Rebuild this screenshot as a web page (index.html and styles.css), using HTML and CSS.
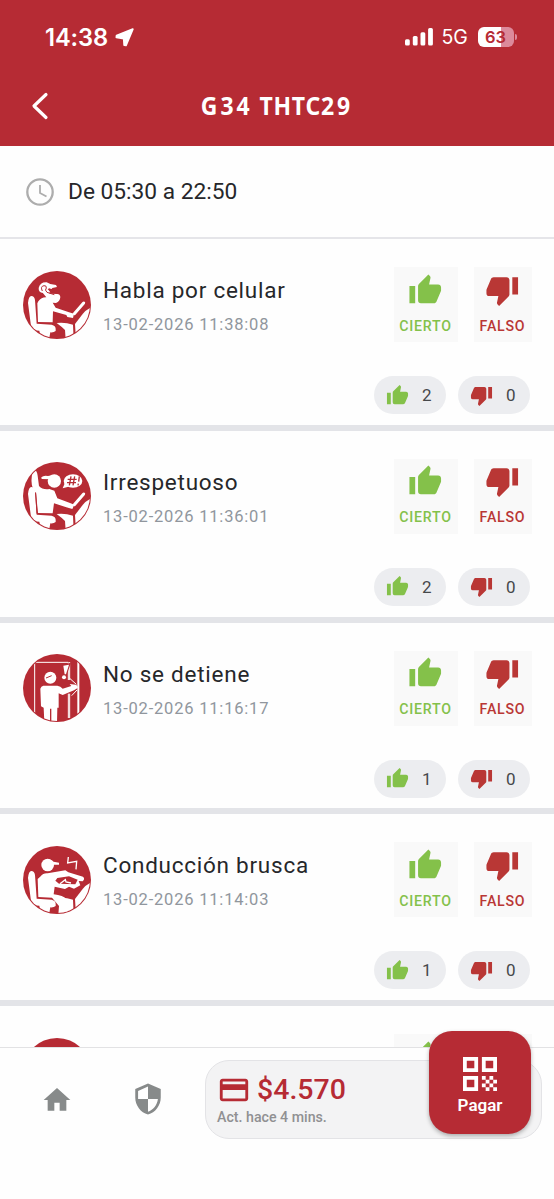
FILE: index.html
```html
<!DOCTYPE html>
<html lang="es">
<head>
<meta charset="utf-8">
<title>G34 THTC29</title>
<link rel="stylesheet" href="styles.css">
</head>
<body>
<svg class="defs" width="0" height="0">
  <symbol id="up" viewBox="0 0 24 24"><path d="M23,10C23,8.89 22.1,8 21,8H14.68L15.64,3.43C15.66,3.33 15.67,3.22 15.67,3.11C15.67,2.7 15.5,2.32 15.23,2.05L14.17,1L7.59,7.58C7.22,7.95 7,8.45 7,9V19A2,2 0 0,0 9,21H18C18.83,21 19.54,20.5 19.84,19.78L22.86,12.73C22.95,12.5 23,12.26 23,12V10M1,21H5V9H1V21Z"/></symbol>
  <symbol id="down" viewBox="0 0 24 24"><path d="M19,15H23V3H19M15,3H6C5.17,3 4.46,3.5 4.16,4.22L1.14,11.27C1.05,11.5 1,11.74 1,12V14A2,2 0 0,0 3,16H9.31L8.36,20.57C8.34,20.67 8.33,20.77 8.33,20.88C8.33,21.3 8.5,21.67 8.77,21.94L9.83,23L16.41,16.41C16.78,16.05 17,15.55 17,15V5C17,3.89 16.1,3 15,3Z"/></symbol>
  <clipPath id="disc"><circle cx="126" cy="128" r="99"/></clipPath>
  <g id="seat">
    <path d="M39 122Q41 101 49 101Q58 101 60 113L65 184L110 187Q122 190 122 199V206Q116 211 106 210L102 232L76 222L73 205Q53 204 49 199Z" fill="#fff"/>
    <path d="M125 182Q150 179 174 187L176 232H152L150 203Q140 193 125 182Z" fill="#fff"/>
  </g>
  <path id="dash" d="M232 134Q214 141 203 155L180 185L182 217L232 200Z" fill="#fff"/>
  <path id="wheel" d="M178 154L206 122" stroke="#fff" stroke-width="9" stroke-linecap="round"/>
</svg>
<div class="screen">
  <header class="header">
    <div class="status">
      <span class="time">14:38</span>
      <svg class="loc" viewBox="0 0 19 19"><path d="M17.8 1.2L11 17.4L9.2 17.2L8.8 10.6L1.4 9.4L1.6 7.6Z"/></svg>
      <svg class="signal" viewBox="0 0 28 18"><rect y="11.3" width="4.8" height="6.3" rx="1.5"/><rect x="7.8" y="8" width="4.8" height="9.6" rx="1.5"/><rect x="15.5" y="4.2" width="4.8" height="13.4" rx="1.5"/><rect x="23.1" y="0" width="4.8" height="17.6" rx="1.5"/></svg>
      <span class="net">5G</span>
      <span class="battery">63</span><span class="tip"></span>
    </div>
    <div class="titlebar">
      <svg class="back" viewBox="0 0 18 28"><path d="M15 2.5L3 14L15 25.5"/></svg>
      <h1 class="title"><span class="wide">G34</span> THTC<span class="wide">29</span></h1>
    </div>
  </header>
  <section class="schedule">
    <svg class="clock" viewBox="0 0 28 28"><circle cx="14" cy="14" r="12.7"/><path d="M14 7V15L20.5 18.5"/></svg>
    <span>De 05:30 a 22:50</span>
  </section>
  <main class="list">
    <article class="item">
      <div class="top">
        <svg class="avatar" viewBox="24 26 204 204">
          <circle cx="126" cy="128" r="102" fill="#b62b34"/>
          <g clip-path="url(#disc)">
            <use href="#seat"/>
            <use href="#dash"/>
            <use href="#wheel"/>
            <path d="M70 117Q80 104 94 105L83 91L93 88L106 94L125 95Q135 94 136 104Q135 118 123 122L113 121L122 136L162 150L177 154L174 167L157 164L154 158L114 147L113 180L69 179L67 123Z" fill="#fff"/>
            <path d="M84 92Q70 91 71 77Q75 59 95 60L106 65L123 68L126 74L112 77Q110 82 104 78L98 80L106 90L95 94" fill="#fff"/>
            <path d="M82 86Q75 72 87 70Q95 69 94 77Q88 83 96 90L118 97" fill="none" stroke="#b62b34" stroke-width="3"/>
          </g>
        </svg>
        <div class="text"><h2>Habla por celular</h2><time>13-02-2026 11:38:08</time></div>
        <button class="vote yes"><svg><use href="#up"/></svg>CIERTO</button>
        <button class="vote no"><svg><use href="#down"/></svg>FALSO</button>
      </div>
      <div class="counts"><span class="pill yes"><svg><use href="#up"/></svg><b>2</b></span><span class="pill no"><svg><use href="#down"/></svg><b>0</b></span></div>
    </article>
    <article class="item">
      <div class="top">
        <svg class="avatar" viewBox="24 26 204 204">
          <circle cx="126" cy="128" r="102" fill="#b62b34"/>
          <g clip-path="url(#disc)">
            <use href="#seat"/>
            <use href="#dash"/>
            <use href="#wheel"/>
            <path d="M59 50Q66 52 68 67L72 98Q83 110 103 107L118 112L127 135L165 149L178 154L172 167L154 162L117 150L113 180L69 179L63 120L54 106Q48 92 50 74Q51 52 59 50Z" fill="#fff"/>
            <circle cx="118" cy="83" r="20" fill="#fff"/>
            <path d="M79 72Q86 65 99 68L114 65L108 78L80 77Z" fill="#fff"/>
            <path d="M62 118L66 181" fill="none" stroke="#b62b34" stroke-width="3"/>
            <ellipse cx="174" cy="83" rx="28" ry="20" fill="#fff"/><path d="M150 88L143 105L166 99Z" fill="#fff"/>
            <path d="M168 69L163 96M179 69L174 96M158 78H185M156 88H183M193 69L191 85M190 91L189 96" fill="none" stroke="#b62b34" stroke-width="4"/>
          </g>
        </svg>
        <div class="text"><h2>Irrespetuoso</h2><time>13-02-2026 11:36:01</time></div>
        <button class="vote yes"><svg><use href="#up"/></svg>CIERTO</button>
        <button class="vote no"><svg><use href="#down"/></svg>FALSO</button>
      </div>
      <div class="counts"><span class="pill yes"><svg><use href="#up"/></svg><b>2</b></span><span class="pill no"><svg><use href="#down"/></svg><b>0</b></span></div>
    </article>
    <article class="item">
      <div class="top">
        <svg class="avatar" viewBox="24 26 204 204">
          <circle cx="126" cy="128" r="102" fill="#b62b34"/>
          <g clip-path="url(#disc)">
            <path d="M59 205V51H160V104M160 145V218M164 50V104M164 145V218" fill="none" stroke="#fff" stroke-width="3"/>
            <path d="M190 48V205" stroke="#fff" stroke-width="6"/>
            <circle cx="106" cy="97" r="18" fill="#fff"/>
            <path d="M93 98L110 91" stroke="#b62b34" stroke-width="3"/>
            <path d="M85 121H127Q137 122 143 130L169 122L164 116L182 118Q190 121 188 128L177 135L143 149L131 144V187H127L126 232H109V190H105V232H88L86 187L78 183L76 130Q78 122 85 121Z" fill="#fff"/>
            <path d="M143 61L164 56L153 87H148Z" fill="#b62b34" stroke="#b62b34" stroke-width="5"/>
            <path d="M145 61L162 58L153 87H149Z" fill="#fff"/><circle cx="147" cy="96" r="6" fill="#fff"/>
            <path d="M163 98L184 117M170 151L186 134" stroke="#fff" stroke-width="3"/>
          </g>
        </svg>
        <div class="text"><h2>No se detiene</h2><time>13-02-2026 11:16:17</time></div>
        <button class="vote yes"><svg><use href="#up"/></svg>CIERTO</button>
        <button class="vote no"><svg><use href="#down"/></svg>FALSO</button>
      </div>
      <div class="counts"><span class="pill yes"><svg><use href="#up"/></svg><b>1</b></span><span class="pill no"><svg><use href="#down"/></svg><b>0</b></span></div>
    </article>
    <article class="item">
      <div class="top">
        <svg class="avatar" viewBox="24 26 204 204">
          <circle cx="126" cy="128" r="102" fill="#b62b34"/>
          <g clip-path="url(#disc)">
            <use href="#seat"/>
            <use href="#dash"/>
            <circle cx="98" cy="83" r="19" fill="#fff"/>
            <path d="M100 65L116 73L132 76V82H112Z" fill="#fff"/>
            <path d="M77 117Q84 107 98 108L151 99L160 105L204 118Q211 124 203 132L191 131L196 144L177 154L162 148L150 155L119 148L116 171Q144 174 156 187L160 232H130L132 206L111 181L70 179L68 125Z" fill="#fff"/>
            <path d="M127 122L162 117L188 127L181 141L132 139L121 130Z" fill="#b62b34"/>
            <path d="M135 139L151 127L153 134L168 137" fill="none" stroke="#fff" stroke-width="4"/>
            <path d="M160 59L158 77L185 72L183 96" fill="none" stroke="#fff" stroke-width="4"/>
          </g>
        </svg>
        <div class="text"><h2>Conducción brusca</h2><time>13-02-2026 11:14:03</time></div>
        <button class="vote yes"><svg><use href="#up"/></svg>CIERTO</button>
        <button class="vote no"><svg><use href="#down"/></svg>FALSO</button>
      </div>
      <div class="counts"><span class="pill yes"><svg><use href="#up"/></svg><b>1</b></span><span class="pill no"><svg><use href="#down"/></svg><b>0</b></span></div>
    </article>
    <article class="item">
      <div class="top">
        <svg class="avatar" viewBox="24 26 204 204"><circle cx="126" cy="128" r="102" fill="#b62b34"/></svg>
        <div class="text"></div>
        <button class="vote yes"><svg><use href="#up"/></svg></button>
        <button class="vote no"><svg><use href="#down"/></svg></button>
      </div>
    </article>
  </main>
  <nav class="nav">
    <svg class="home" viewBox="0 0 24 24"><path d="M10,20V14H14V20H19V12H22L12,3L2,12H5V20H10Z"/></svg>
    <svg class="shield" viewBox="0 0 24 24"><path d="M12 1L3 5v6c0 5.55 3.84 10.74 9 12 5.16-1.26 9-6.45 9-12V5l-9-4zm0 10.99h7c-.53 4.12-3.28 7.79-7 8.94V12H5V6.3l7-3.11v8.8z"/></svg>
    <div class="balance">
      <div class="amount"><svg viewBox="0 0 24 24"><path d="M20 4H4c-1.11 0-1.99.89-1.99 2L2 18c0 1.11.89 2 2 2h16c1.11 0 2-.89 2-2V6c0-1.11-.89-2-2-2zm0 14H4v-6h16v6zm0-10H4V6h16v2z"/></svg><span>$4.570</span></div>
      <div class="updated">Act. hace 4 mins.</div>
      <button class="pay">
        <svg viewBox="0 0 18 18"><path fill-rule="evenodd" d="M0 0h8v8h-8zM2 2v4h4v-4zM10 0h8v8h-8zM12 2v4h4v-4zM0 10h8v8h-8zM2 12v4h4v-4z"/><path d="M10 10h2v2h-2zM14 10h2v2h-2zM12 12h2v2h-2zM16 12h2v2h-2zM10 14h2v2h-2zM14 14h2v2h-2zM12 16h2v2h-2zM16 16h2v2h-2z"/></svg>
        <span>Pagar</span>
      </button>
    </div>
  </nav>
</div>
</body>
</html>
```
FILE: styles.css
```css
* { box-sizing: border-box; }
body { margin: 0; font-family: Roboto, sans-serif; background: #fefefe; }
svg { display: block; flex: none; }
.defs { position: absolute; }
h1, h2 { margin: 0; font-weight: 400; }
button { border: 0; margin: 0; padding: 0; font-family: inherit; }

.screen { width: 554px; height: 1199px; display: flex; flex-direction: column; overflow: hidden; }

.header { height: 146px; flex: none; background: #b62b34; color: #fff; }
.status { height: 74px; padding: 0 39.5px 0 45px; display: flex; align-items: center; font-family: Inter, sans-serif; }
.time { width: 70px; font-size: 23.7px; font-weight: 600; letter-spacing: -0.1px; white-space: nowrap; }
.loc { width: 19px; height: 19px; fill: #fff; stroke: #fff; stroke-width: 1.8; stroke-linejoin: round; }
.signal { width: 28px; height: 18px; margin-left: auto; fill: #fff; }
.net { margin-left: 9px; width: 27px; font-size: 19.5px; white-space: nowrap; }
.battery { width: 36px; height: 20px; margin-left: 9px; border-radius: 6px; background: linear-gradient(90deg, #fff 63%, #dc8a9b 63%); color: #b62b34; font-size: 16.5px; line-height: 20px; font-weight: 600; text-align: center; }
.tip { width: 2px; height: 6px; margin-left: 1px; margin-right: -2px; border-radius: 0 3px 3px 0; background: #dc8a9b; }
.titlebar { height: 64px; display: grid; grid-template-columns: 60px 1fr 60px; align-items: center; }
.back { width: 18px; height: 28px; margin-left: 31px; fill: none; stroke: #fff; stroke-width: 3.2; stroke-linecap: round; stroke-linejoin: round; }
.title { padding-bottom: 2px; font: 700 25.5px/30px "Noto Sans", sans-serif; letter-spacing: 0.9px; text-align: center; white-space: nowrap; transform: scaleX(0.9); }
.wide { letter-spacing: 3.3px; }

.schedule { height: 93px; flex: none; padding: 0 26px; display: flex; align-items: center; gap: 14px; border-bottom: 2px solid #e5e5e9; font-size: 22.7px; color: #26272a; }
.clock { width: 28px; height: 28px; fill: none; stroke: #adadad; stroke-width: 2.3; }
.clock path { stroke-width: 1.8; }

.list { flex: 1; min-height: 0; overflow: hidden; }
.item { height: 191.75px; padding: 28px 22.5px 0 23px; border-bottom: 6px solid #e3e4e8; }
.top { display: flex; }
.avatar { width: 68px; height: 68px; margin-top: 3.5px; }
.text { flex: 1; padding: 9px 0 0 12px; }
.text h2 { font-size: 22.5px; line-height: 28px; letter-spacing: 0.75px; color: #26272a; white-space: nowrap; }
.text time { display: block; margin-top: 10px; font-size: 16.5px; line-height: 22px; letter-spacing: 0.8px; color: #90969d; }
.vote { height: 75px; padding-top: 5.5px; display: flex; flex-direction: column; align-items: center; gap: 9.5px; background: #f9f9f9; font-size: 14.2px; line-height: 18px; font-weight: 500; letter-spacing: 0.75px; }
.vote svg { width: 34.5px; height: 34.5px; fill: currentColor; }
.vote.yes { width: 64px; }
.vote.no { width: 58px; margin-left: 16px; }
.yes { color: #84c14a; }
.no { color: #b93735; }
.counts { display: flex; justify-content: flex-end; gap: 12px; margin: 34px 2px 0 0; }
.pill { width: 72px; height: 38px; border-radius: 19px; padding: 0 14px 0 12px; display: flex; align-items: center; justify-content: space-between; background: #ecedf0; }
.pill svg { width: 23px; height: 23px; fill: currentColor; }
.pill b { font-size: 17px; font-weight: 400; color: #46484b; }

.nav { height: 152px; flex: none; padding: 12px 12px 0 41px; display: flex; align-items: flex-start; border-top: 1px solid #e2e2e4; background: #fefefe; }
.home { width: 32px; height: 32px; margin-top: 23.5px; fill: #878a8a; }
.shield { width: 34px; height: 34px; margin: 22px 40.5px 0 57.5px; fill: #878a8a; }
.balance { position: relative; flex: 1; height: 79px; padding: 11px 0 0 11px; border: 1.5px solid #e3e3e6; border-radius: 24px; background: #f3f3f4; }
.amount { height: 35px; display: flex; align-items: center; gap: 6px; color: #b62b34; font-size: 28.5px; font-weight: 500; }
.amount svg { width: 34px; height: 34px; fill: #b62b34; }
.updated { margin-top: 1px; font-size: 14.2px; line-height: 18px; font-weight: 500; color: #909092; }
.pay { position: absolute; right: 10px; top: -30px; width: 102px; height: 103px; border-radius: 23px; padding-top: 26px; display: flex; flex-direction: column; align-items: center; gap: 4px; background: #b62b34; color: #fff; font-size: 17px; line-height: 20px; font-weight: 600; box-shadow: 0 2px 4px rgba(0, 0, 0, .3); }
.pay svg { width: 34px; height: 34px; fill: #fff; }
```
